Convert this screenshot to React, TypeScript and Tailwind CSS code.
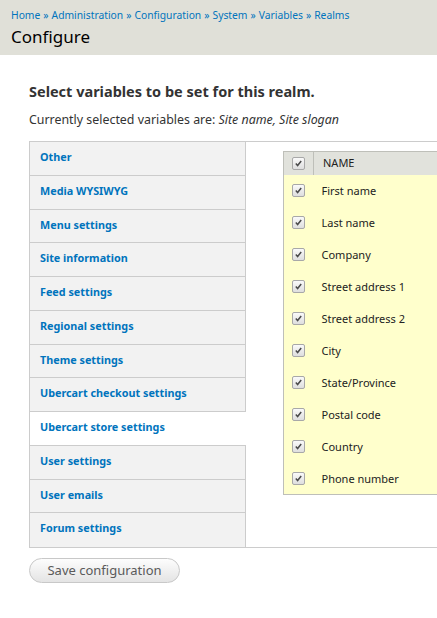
import React from "react";

const crumbs = ["Home", "Administration", "Configuration", "System", "Variables", "Realms"];

const tabs = [
  "Other",
  "Media WYSIWYG",
  "Menu settings",
  "Site information",
  "Feed settings",
  "Regional settings",
  "Theme settings",
  "Ubercart checkout settings",
  "Ubercart store settings",
  "User settings",
  "User emails",
  "Forum settings",
];

const ACTIVE = "Ubercart store settings";

const fields = [
  "First name",
  "Last name",
  "Company",
  "Street address 1",
  "Street address 2",
  "City",
  "State/Province",
  "Postal code",
  "Country",
  "Phone number",
];

function Check() {
  return (
    <span className="flex h-[13px] w-[13px] items-center justify-center rounded-[2px] border border-[#a8a8a8] bg-gradient-to-b from-[#fafafa] to-[#dedede]">
      <svg width="9" height="9" viewBox="0 0 9 9">
        <path d="M1.8 4.6 L3.6 6.5 L7.2 2" fill="none" stroke="#4a4a4a" strokeWidth="1.5" />
      </svg>
    </span>
  );
}

export default function App() {
  return (
    <div
      className="min-h-[618px] w-[437px] overflow-hidden bg-white text-[#333]"
      style={{ fontFamily: '"Noto Sans", "DejaVu Sans", sans-serif' }}
    >
      <header className="h-[55px] bg-[#e0e0d8] px-[11px] pt-[7px]">
        <nav className="flex text-[10.3px] leading-[16px] text-[#0074bd]">
          {crumbs.map((c, i) => (
            <span key={c}>
              {c}
              {i < crumbs.length - 1 && <span className="px-[3px]">»</span>}
            </span>
          ))}
        </nav>
        <h1 className="mt-[2px] text-[17px] leading-[24px] text-black">Configure</h1>
      </header>

      <main className="w-[620px] pl-[29px] pt-[27px]">
        <h2 className="text-[14.5px] font-bold leading-[18px] text-[#333]">
          Select variables to be set for this realm.
        </h2>
        <p className="mt-[12px] text-[12.4px] leading-[16px] text-[#333]">
          Currently selected variables are: <em>Site name, Site slogan</em>
        </p>

        <div className="mt-[13px] flex border-y border-[#ccc]">
          <ul className="w-[217px] shrink-0 border-x border-[#ccc] bg-[#f2f2f2]">
            {tabs.map((t, i) => {
              const active = t === ACTIVE;
              return (
                <li
                  key={t}
                  className={
                    "h-[33.75px] pl-[10px] pt-[7px] text-[10.8px] font-bold leading-[16px] text-[#0074bd] " +
                    (i < tabs.length - 1 ? "border-b border-[#ccc] " : "") +
                    (active ? "relative -mr-px bg-white" : "")
                  }
                >
                  {t}
                </li>
              );
            })}
          </ul>

          <div className="flex-1 pl-[37px] pt-[9px]">
            <table className="w-[300px] border-collapse border border-[#bebfb9] text-[11px] text-[#333]">
              <thead>
                <tr className="h-[23px] bg-[#e1e2dc]">
                  <th className="w-[30px] border-r border-[#bebfb9] pl-[8px] align-middle">
                    <Check />
                  </th>
                  <th className="pl-[9px] text-left text-[11px] font-normal uppercase text-[#222]">
                    Name
                  </th>
                </tr>
              </thead>
              <tbody className="bg-[#ffffcc]">
                {fields.map((f) => (
                  <tr key={f} className="h-[32px]">
                    <td className="pl-[8px] align-middle">
                      <Check />
                    </td>
                    <td className="pl-[8px] pt-[1px] align-middle text-[#222]">{f}</td>
                  </tr>
                ))}
              </tbody>
            </table>
          </div>
        </div>

        <button className="mt-[10px] h-[25px] w-[151px] rounded-full border border-[#c8c8c8] bg-gradient-to-b from-[#fdfdfd] to-[#e4e4e4] text-[13px] text-[#5a5a5a]">
          Save configuration
        </button>
      </main>
    </div>
  );
}
